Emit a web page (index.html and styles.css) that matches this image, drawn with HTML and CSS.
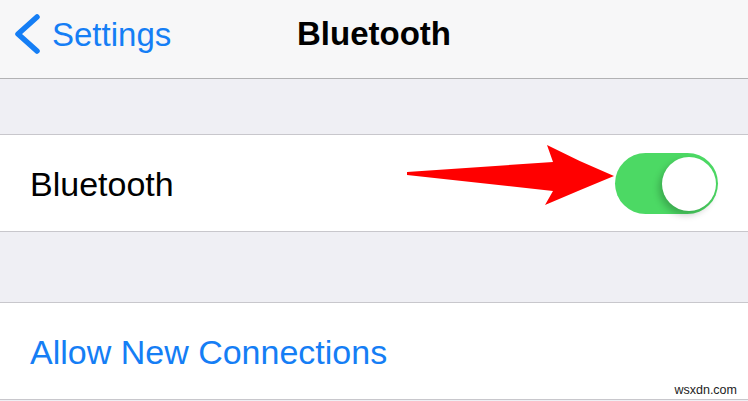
FILE: index.html
```html
<!DOCTYPE html>
<html lang="en">
<head>
<meta charset="utf-8">
<title>Bluetooth</title>
<link rel="stylesheet" href="styles.css">
</head>
<body>
<div class="screen">
  <header class="navbar">
    <a class="back">
      <svg class="chevron" width="28" height="46" viewBox="0 0 28 46"><path d="M25 5 L6 22 L25 39" fill="none" stroke="#157ef5" stroke-width="5.5" stroke-linecap="round" stroke-linejoin="round"/></svg>
      <span class="back-label">Settings</span>
    </a>
    <h1 class="title">Bluetooth</h1>
    <div class="nav-right"></div>
  </header>

  <div class="spacer spacer-top"></div>
  <section class="group">
    <div class="cell">
      <span class="cell-label">Bluetooth</span>
      <svg class="arrow" width="220" height="75" viewBox="0 0 220 75"><path d="M7 32 L153 22 L147 5 Q180 22 214 36 Q180 50 145 65 L153 51 L7 35 Z" fill="#ff0000"/></svg>
      <div class="toggle"><div class="knob"></div></div>
    </div>
  </section>
  <div class="spacer spacer-mid"></div>
  <section class="group">
    <div class="cell">
      <span class="cell-label link">Allow New Connections</span>
    </div>
  </section>
  <div class="watermark">wsxdn.com</div>
</div>
</body>
</html>
```

FILE: styles.css
```css
html, body {
  margin: 0;
  padding: 0;
}
body {
  background: #efeff4;
  font-family: "Liberation Sans", Arial, sans-serif;
  width: 748px;
  height: 401px;
  overflow: hidden;
}
.screen {
  position: relative;
  height: 401px;
}
.navbar {
  height: 68px;
  padding-bottom: 10px;
  background: #f7f7f8;
  border-bottom: 1px solid #b2b2b4;
  display: grid;
  grid-template-columns: 1fr auto 1fr;
  align-items: center;
}
.back {
  display: flex;
  align-items: center;
  padding-left: 12px;
  color: #157ef5;
}
.chevron {
  display: block;
  flex: none;
  margin-right: 12px;
  margin-top: 2px;
}
.back-label {
  font-size: 33px;
  line-height: 40px;
  padding-top: 1px;
}
.title {
  margin: 0;
  font-size: 33px;
  font-weight: bold;
  line-height: 40px;
  color: #000;
}
.spacer-top {
  height: 55px;
}
.spacer-mid {
  height: 70px;
}
.group {
  background: #fff;
  border-top: 1px solid #c8c7cc;
  border-bottom: 1px solid #c8c7cc;
}
.cell {
  position: relative;
  height: 96px;
  display: flex;
  align-items: center;
  justify-content: space-between;
  padding: 0 30px 0 30px;
}
.cell-label {
  font-size: 34px;
  line-height: 40px;
  padding-top: 2px;
  color: #000;
}
.cell-label.link {
  color: #157ef5;
}
.arrow {
  position: absolute;
  left: 400px;
  top: 5px;
}
.toggle {
  position: relative;
  width: 103px;
  height: 61px;
  border-radius: 31px;
  background: #4cd964;
  margin-top: 1px;
}
.knob {
  position: absolute;
  right: 2px;
  top: 4px;
  width: 54px;
  height: 54px;
  border-radius: 50%;
  background: #fff;
  box-shadow: -3px 4px 7px rgba(0, 0, 0, 0.22);
}
.watermark {
  position: absolute;
  right: 11px;
  top: 384px;
  font-size: 12.5px;
  line-height: 1;
  color: #222;
}
```
